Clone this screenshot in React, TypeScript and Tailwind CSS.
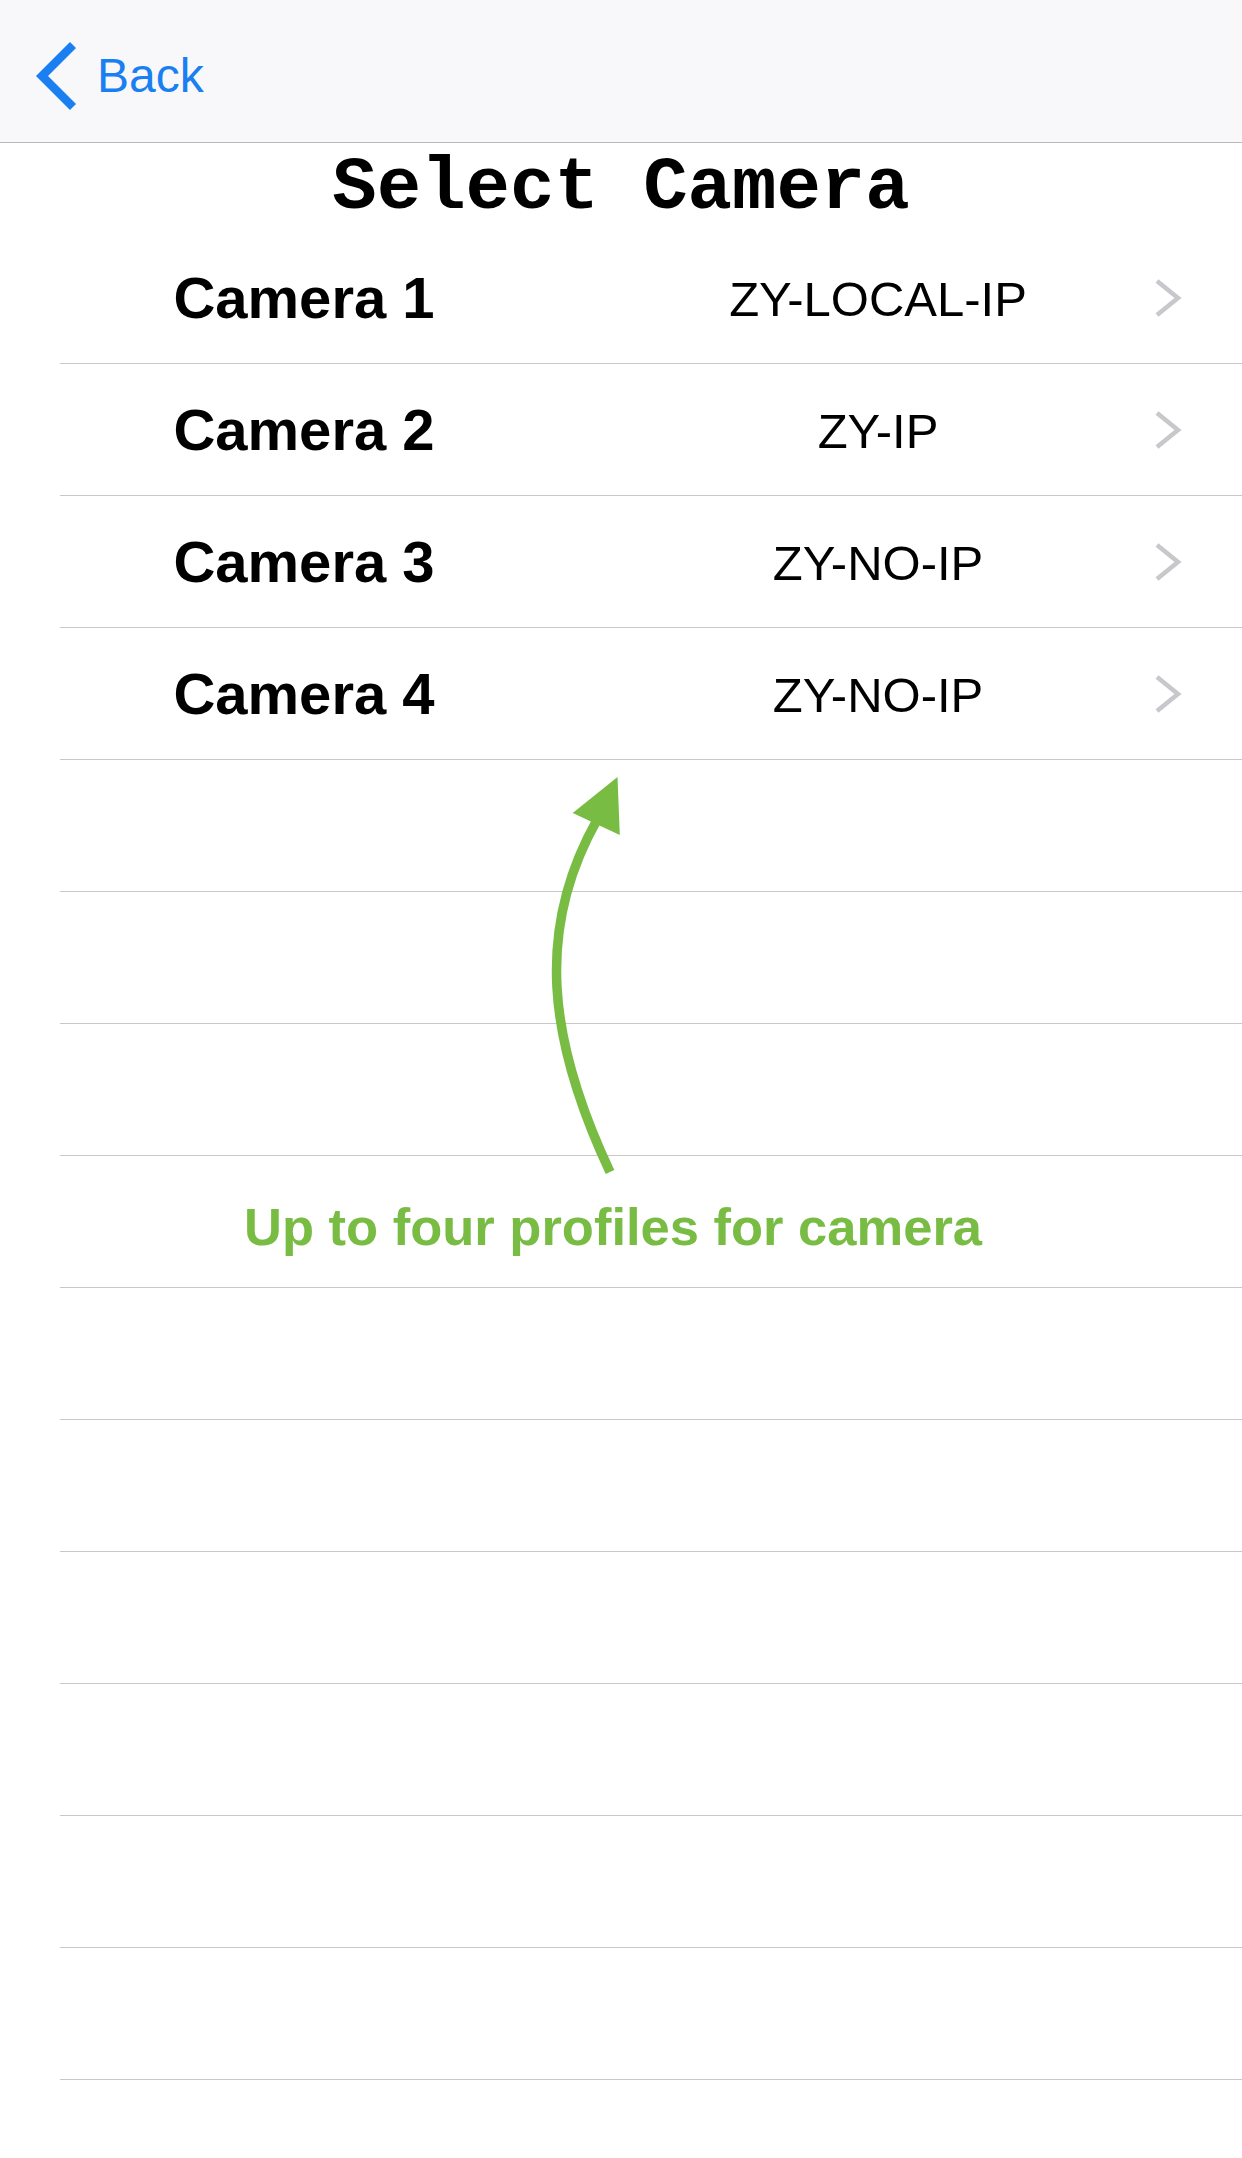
import React from "react";

const rows: { label: string; value: string }[] = [
  { label: "Camera 1", value: "ZY-LOCAL-IP" },
  { label: "Camera 2", value: "ZY-IP" },
  { label: "Camera 3", value: "ZY-NO-IP" },
  { label: "Camera 4", value: "ZY-NO-IP" },
  ...Array.from({ length: 10 }, () => ({ label: "", value: "" })),
];

function Chevron() {
  return (
    <svg width="30" height="40" viewBox="0 0 30 40" className="shrink-0">
      <polyline
        points="4,3 25,20 4,37"
        fill="none"
        stroke="#c7c7cc"
        strokeWidth="4.5"
        strokeLinecap="butt"
        strokeLinejoin="miter"
      />
    </svg>
  );
}

export default function App() {
  return (
    <div className="relative w-[1242px] h-[2158px] bg-white overflow-hidden" style={{ fontFamily: '"Liberation Sans", Arial, sans-serif' }}>
      {/* Nav bar */}
      <div className="h-[143px] bg-[#f8f8fa] border-b border-[#b9b9bb] flex items-center pt-[10px] pl-[33px]">
        <svg width="46" height="70" viewBox="0 0 46 70" className="shrink-0">
          <polyline points="40,4 9,35 40,66" fill="none" stroke="#1a7ff0" strokeWidth="8.5" strokeLinecap="butt" strokeLinejoin="miter" />
        </svg>
        <span className="ml-[18px] text-[48px] leading-none text-[#1a7ff0]">Back</span>
      </div>

      {/* Title */}
      <div className="h-[89px] flex items-center justify-center">
        <span className="text-[74px] leading-none font-bold text-black" style={{ fontFamily: '"Liberation Mono", "Courier New", monospace' }}>
          Select Camera
        </span>
      </div>

      {/* List */}
      <div className="flex flex-col">
        {rows.map((r, i) => (
          <div key={i} className="ml-[60px] h-[132px] border-b border-[#c8c7cc] flex items-center">
            {r.label ? (
              <>
                <div className="w-[488px] text-center text-[58px] leading-none font-bold text-black">{r.label}</div>
                <div className="ml-[56px] w-[548px] text-center text-[49px] leading-none text-black pt-[3px]">{r.value}</div>
                <div className="ml-[1px] pt-[1px]">
                  <Chevron />
                </div>
              </>
            ) : null}
          </div>
        ))}
      </div>

      {/* Annotation arrow */}
      <svg className="absolute left-0 top-0 pointer-events-none" width="1242" height="2158" viewBox="0 0 1242 2158">
        <path d="M 610 1172 C 548 1040, 535 930, 597 820" fill="none" stroke="#78bc44" strokeWidth="9.5" />
        <polygon points="617.5,777 572.7,813 619.8,835" fill="#78bc44" />
      </svg>
      <div className="absolute left-[244px] top-[1201px] text-[52.5px] leading-none font-bold text-[#78bc44] whitespace-nowrap">
        Up to four profiles for camera
      </div>
    </div>
  );
}
